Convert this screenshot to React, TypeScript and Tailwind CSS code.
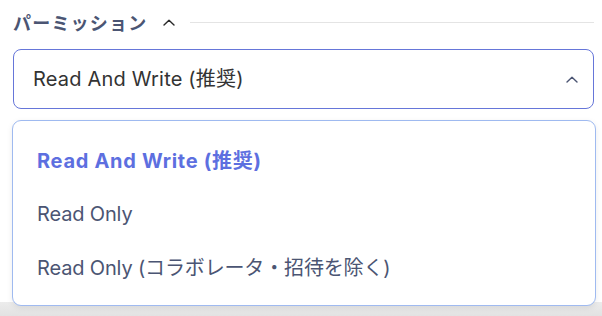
const font = { fontFamily: 'Inter, "Noto Sans CJK JP", sans-serif' };

function Chevron({ className }: { className?: string }) {
  return (
    <svg viewBox="0 0 12 7" className={className} fill="none" stroke="currentColor" strokeWidth={1.4} strokeLinecap="round" strokeLinejoin="round">
      <path d="M1 6L6 1.2L11 6" />
    </svg>
  );
}

export default function App() {
  const options = [
    { label: "Read And Write (推奨)", selected: true },
    { label: "Read Only", selected: false },
    { label: "Read Only (コラボレータ・招待を除く)", selected: false },
  ];

  return (
    <div className="w-[602px] h-[316px] relative bg-white overflow-hidden flex flex-col" style={font}>
      <div className="flex-1 pl-[13px] pr-[8px]">
        {/* Section header */}
        <div className="h-[44px] flex items-center">
          <span
            className="text-[18px] font-bold text-[#4b5573] tracking-[1.2px]"
            style={{ fontFamily: '"Noto Sans CJK JP", sans-serif' }}
          >
            パーミッション
          </span>
          <Chevron className="w-[12px] h-[7px] ml-[16px] text-[#2a2a2a]" />
          <div className="flex-1 h-px bg-[#e4e4e4] ml-[15px]" />
        </div>

        {/* Select */}
        <div className="mt-[5px] h-[60px] border border-[#6676d9] rounded-[8px] flex items-center justify-between pl-[19px] pr-[15px]">
          <span className="text-[20px] tracking-[0.2px] text-[#333333]">Read And Write (推奨)</span>
          <Chevron className="w-[12px] h-[7px] text-[#4b5573]" />
        </div>
      </div>

      <div className="h-[14px] bg-gradient-to-b from-[#ececec] to-[#e2e2e2]" />

      {/* Dropdown menu */}
      <div className="absolute left-[12px] top-[120px] w-[584px] h-[186px] bg-white border border-[#9fbaf0] rounded-[9px] shadow-[0_2px_6px_rgba(0,0,0,0.08)] flex flex-col justify-center pl-[24px] pt-[2px]">
        {options.map((o) => (
          <div key={o.label} className="h-[53.5px] flex items-center">
            <span
              className={
                o.selected
                  ? "text-[20px] font-bold tracking-[0.7px] text-[#5d6fe0]"
                  : "text-[20px] tracking-[-0.15px] text-[#4b5573]"
              }
            >
              {o.label}
            </span>
          </div>
        ))}
      </div>
    </div>
  );
}
